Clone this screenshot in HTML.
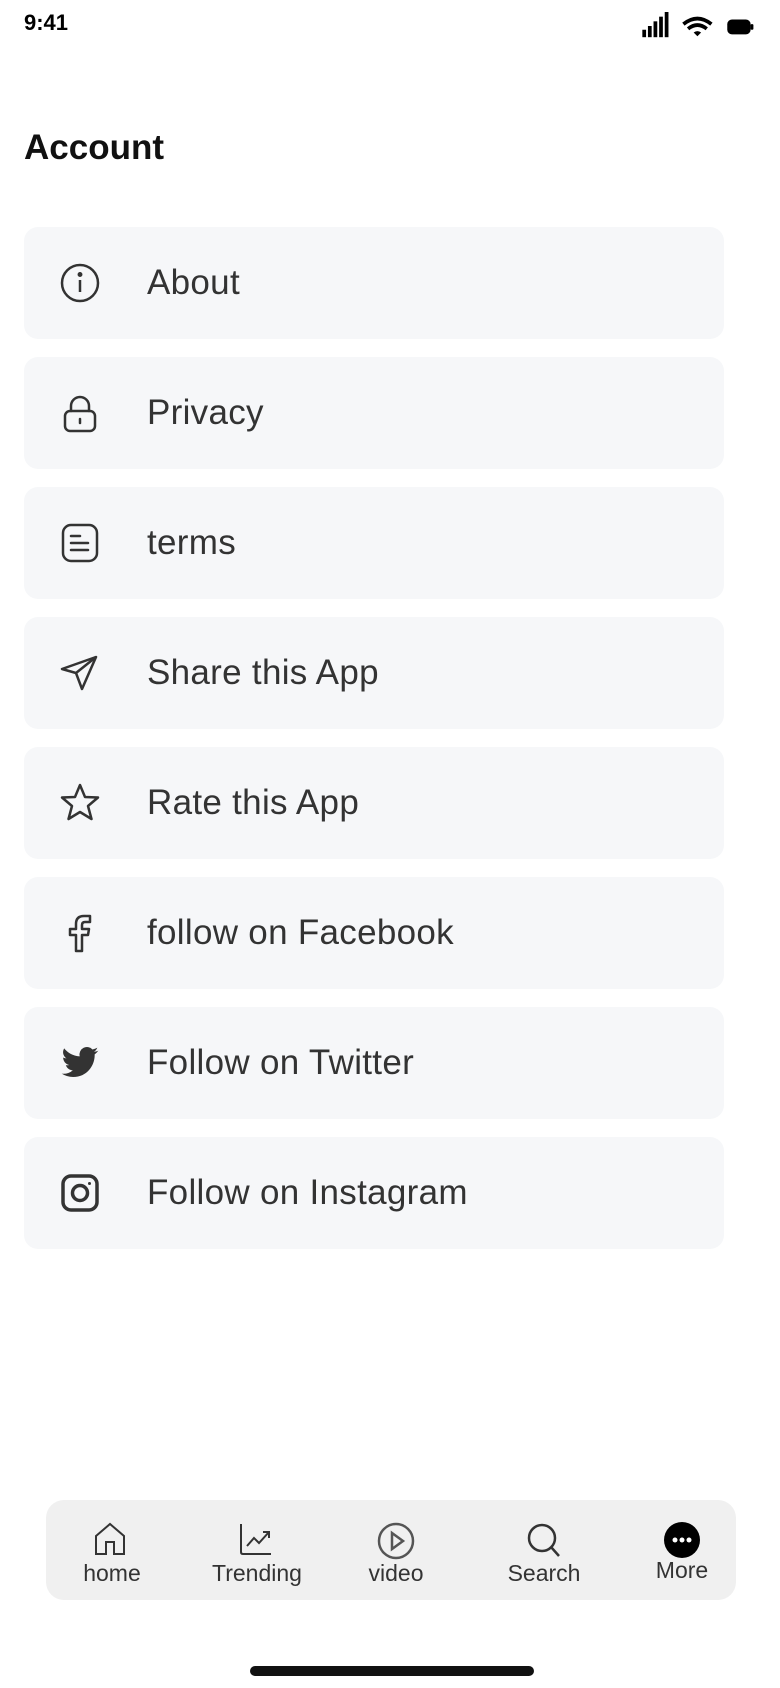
<!DOCTYPE html>
<html><head><meta charset="utf-8">
<style>
*{margin:0;padding:0;box-sizing:border-box}
body{width:780px;height:1688px;background:#fff;font-family:"Liberation Sans",sans-serif;position:relative;overflow:hidden;color:#333}
.abs{position:absolute}
.card{position:absolute;left:24px;width:700px;height:112px;background:#f6f7f9;border-radius:14px}
.card svg{position:absolute;left:36px;top:36px}
.card span{position:absolute;left:123px;top:0;line-height:112px;font-size:35px;letter-spacing:0.3px;color:#333}
.nav{position:absolute;left:46px;top:1500px;width:690px;height:100px;background:#f0f0f0;border-radius:18px}
.item{position:absolute;top:0;width:140px;text-align:center}
.item svg{position:absolute;top:22px}
.item div{position:absolute;top:60px;width:100%;text-align:center;font-size:23px;color:#333}
</style></head><body>
<div class="abs" style="left:24px;top:10px;font-size:22px;font-weight:bold;color:#000">9:41</div>
<svg class="abs" style="left:638px;top:12px" width="130" height="28" viewBox="0 0 130 30">
<rect x="0" y="19" width="4" height="8" fill="#000"/><rect x="6" y="15" width="4" height="12" fill="#000"/><rect x="12" y="10" width="4" height="17" fill="#000"/><rect x="18" y="5" width="4" height="22" fill="#000"/><rect x="24" y="0" width="4" height="27" fill="#000"/>
<path d="M44 13 Q59 1 74 13" stroke="#000" stroke-width="4" fill="none"/><path d="M49 18 Q59 10 69 18" stroke="#000" stroke-width="4" fill="none"/><path d="M55 22 L59 26 L63 22 Q59 19 55 22Z" fill="#000"/>
<rect x="91" y="8" width="25" height="16" rx="5" fill="#000"/><rect x="116" y="13" width="3" height="6" rx="1" fill="#000"/>
</svg>
<div class="abs" style="left:24px;top:128px;font-size:35px;font-weight:bold;color:#111">Account</div>

<div class="card" style="top:227px"><svg width="40" height="40" viewBox="0 0 40 40" fill="none" stroke="#333" stroke-width="2.5"><circle cx="20" cy="20" r="18"/><line x1="20" y1="17" x2="20" y2="29"/><circle cx="20" cy="11.5" r="1.2" fill="#333"/></svg><span>About</span></div>
<div class="card" style="top:357px"><svg width="40" height="40" viewBox="0 0 40 40" fill="none" stroke="#333" stroke-width="2.5" stroke-linecap="round"><path d="M11 18 V13 a9 9 0 0 1 18 0 V18"/><rect x="5" y="18" width="30" height="20" rx="5"/><line x1="20" y1="26" x2="20" y2="30"/></svg><span>Privacy</span></div>
<div class="card" style="top:487px"><svg width="40" height="40" viewBox="0 0 40 40" fill="none" stroke="#333" stroke-width="2.5" stroke-linecap="round"><rect x="3" y="2" width="34" height="36" rx="8"/><line x1="11" y1="13" x2="20" y2="13"/><line x1="11" y1="20" x2="28" y2="20"/><line x1="11" y1="27" x2="28" y2="27"/></svg><span>terms</span></div>
<div class="card" style="top:617px"><svg width="40" height="40" viewBox="0 0 40 40" fill="none" stroke="#333" stroke-width="2.5" stroke-linejoin="round"><path d="M36 4 L2 16 L16 20 L22 36 Z"/><line x1="16" y1="20" x2="36" y2="4"/></svg><span>Share this App</span></div>
<div class="card" style="top:747px"><svg width="40" height="40" viewBox="0 0 40 40" fill="none" stroke="#333" stroke-width="2.5" stroke-linejoin="round"><path d="M20 2 L25 14 L38 14.5 L28 23 L31.5 36 L20 29 L8.5 36 L12 23 L2 14.5 L15 14 Z"/></svg><span>Rate this App</span></div>
<div class="card" style="top:877px"><svg width="40" height="40" viewBox="0 0 40 40" fill="none" stroke="#333" stroke-width="2.5" stroke-linejoin="round"><path d="M16 38 V22 H10 V16 H16 V11 Q16 3 24 3 H30 V9 H25 Q22 9 22 12 V16 H29 L28 22 H22 V38 Z"/></svg><span>follow on Facebook</span></div>
<div class="card" style="top:1007px"><svg width="40" height="40" viewBox="0 0 24 24"><path fill="#333" d="M23 4.6c-.8.4-1.7.6-2.6.7.9-.6 1.6-1.4 2-2.5-.9.5-1.9.9-2.9 1.1A4.5 4.5 0 0 0 11.8 8C8 7.8 4.7 6 2.5 3.2c-1.3 2.1-.6 4.7 1.4 6-.7 0-1.4-.2-2-.5 0 2.2 1.5 4.1 3.6 4.5-.7.2-1.4.2-2 .1.6 1.8 2.3 3.1 4.2 3.1A9 9 0 0 1 1 18.4 12.8 12.8 0 0 0 7.9 20.4c8.3 0 12.9-7 12.9-13v-.6c.9-.6 1.6-1.4 2.2-2.2z"/></svg><span>Follow on Twitter</span></div>
<div class="card" style="top:1137px"><svg width="40" height="40" viewBox="0 0 40 40" fill="none" stroke="#333" stroke-width="3.5"><rect x="3" y="3" width="34" height="34" rx="8"/><circle cx="20" cy="20" r="7.5"/><circle cx="29.5" cy="10.5" r="1.5" fill="#333" stroke="none"/></svg><span style="font-weight:500">Follow on Instagram</span></div>

<div class="nav">
<div class="item" style="left:-4px"><svg style="left:52px" width="32" height="34" viewBox="0 0 32 34" fill="none" stroke="#333" stroke-width="2"><path d="M2 14 L16 2 L30 14 V32 H20 V20 H12 V32 H2 Z"/></svg><div>home</div></div>
<div class="item" style="left:141px"><svg style="left:52px" width="34" height="34" viewBox="0 0 34 34" fill="none" stroke="#333" stroke-width="2"><path d="M2 2 V30 Q2 32 4 32 H32"/><path d="M8 24 L15 16 L20 21 L30 10 M24 10 H30 V16"/></svg><div>Trending</div></div>
<div class="item" style="left:280px"><svg style="left:51px" width="38" height="38" viewBox="0 0 38 38" fill="none" stroke="#555" stroke-width="2.5"><circle cx="19" cy="19" r="17"/><path d="M15 11 L26 19 L15 27 Z"/></svg><div>video</div></div>
<div class="item" style="left:428px"><svg style="left:52px" width="38" height="38" viewBox="0 0 38 38" fill="none" stroke="#333" stroke-width="2.5"><circle cx="16" cy="16" r="13"/><line x1="25" y1="25" x2="33" y2="34"/></svg><div>Search</div></div>
<div class="item" style="left:566px"><svg style="left:52px" width="36" height="36" viewBox="0 0 36 36"><circle cx="18" cy="18" r="18" fill="#000"/><circle cx="11" cy="18" r="2.5" fill="#fff"/><circle cx="18" cy="18" r="2.5" fill="#fff"/><circle cx="25" cy="18" r="2.5" fill="#fff"/></svg><div style="top:57px">More</div></div>
</div>
<div class="abs" style="left:250px;top:1666px;width:284px;height:10px;border-radius:5px;background:#111"></div>
</body></html>
